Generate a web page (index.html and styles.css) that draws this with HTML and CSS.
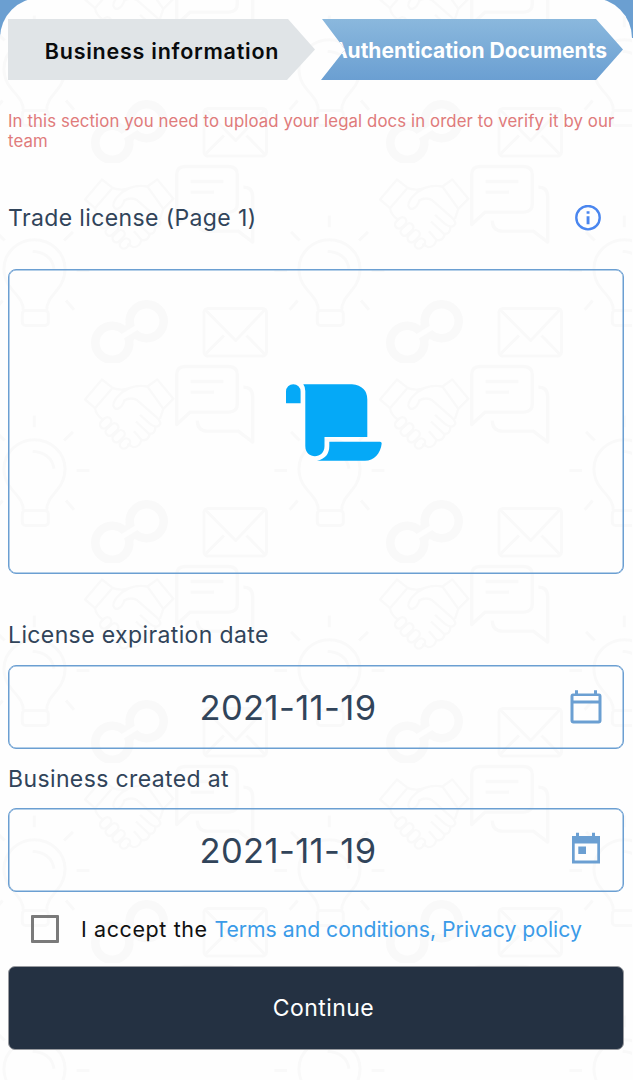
FILE: index.html
```html
<!DOCTYPE html>
<html lang="en">
<head>
<meta charset="utf-8">
<title>Authentication Documents</title>
<link rel="stylesheet" href="styles.css">
</head>
<body>
<main class="sheet">
  <svg class="backdrop" width="633" height="1082" aria-hidden="true">
    <defs>
      <pattern id="doodles" x="-25" y="-35" width="295" height="200" patternUnits="userSpaceOnUse">
        <g transform="translate(25 -162.500)" fill="none" stroke="#f9f9f9" stroke-linejoin="round">
          <!-- bulb -->
          <g transform="translate(0 160) scale(.33333)" stroke-width="9">
            <path d="M70 450C70 400 12 390 12 325C12 276 54 238 103 238S195 276 195 325C195 390 140 400 140 450"/>
            <rect x="67" y="450" width="78" height="45" rx="10"/>
            <path d="M98 272Q155 277 162 325M103 165V200M192 240L219 214M14 240L-12 214M198 420L222 448M8 420L-16 448M230 330H268M-24 330H-62"/>
          </g>
          <!-- link -->
          <g stroke-width="8.6">
            <circle cx="146.7" cy="320.7" r="17"/>
            <circle cx="112.3" cy="342.3" r="17"/>
            <path d="M125 335L134 329" stroke-width="17"/>
            <path d="M119 338L140 325" stroke="#fefefe" stroke-width="5"/>
          </g>
          <!-- envelope -->
          <g stroke-width="3">
            <rect x="204" y="308" width="62.5" height="47.5" rx="4"/>
            <path d="M205 309L235.7 340L265 309M224 335L205 354M246.500 335L265 354"/>
          </g>
          <g transform="translate(80 80) scale(.33333)" stroke-width="10">
            <!-- chat -->
            <path d="M290 432V283Q290 258 315 258H446Q472 258 472 283V370Q472 395 446 395H330ZM490 320Q518 320 518 348V485L475 452H383Q352 452 352 420"/>
            <path d="M332 303H430M332 335H402"/>
            <!-- handshake -->
            <g stroke-width="7">
              <path d="M66 297L15 357L45 383L98 322ZM232 297L280 355L250 385L202 318Z"/>
              <path d="M98 322Q125 333 150 322Q175 313 202 318M150 322C120 335 100 358 100 375C105 395 126 383 133 360Q150 349 170 358L232 412Q250 430 232 438Q224 440 210 430L180 403M250 385L240 415M226 440Q226 462 207 460L168 423M210 461Q202 484 184 478L162 452M184 480Q178 500 160 500L142 490M45 383Q48 403 68 417"/>
              <rect x="58" y="415" width="38" height="24" rx="12" transform="rotate(-45 77 427)"/>
              <rect x="74" y="435" width="44" height="24" rx="12" transform="rotate(-45 96 447)"/>
              <rect x="95" y="455" width="42" height="24" rx="12" transform="rotate(-45 116 467)"/>
              <rect x="118" y="477" width="34" height="24" rx="12" transform="rotate(-45 135 489)"/>
            </g>
          </g>
        </g>
      </pattern>
    </defs>
    <rect width="633" height="1082" fill="url(#doodles)"/>
  </svg>

  <div class="content">
    <nav class="steps">
      <div class="step step-done"><span>Business information</span></div>
      <div class="step step-current"><span>Authentication Documents</span></div>
    </nav>
    <p class="notice">In this section you need to upload your legal docs in order to verify it by our<br>team</p>

    <div class="row">
      <h2 class="label trade">Trade license (Page 1)</h2>
      <svg class="info" width="26" height="26" viewBox="0 0 26 26"><circle cx="13" cy="12.700" r="11.7" fill="none" stroke="#4a86ef" stroke-width="2.4"/><path d="M11.600 6.200h2.900v2.600h-2.900zM11.600 11.200h2.900v8h-2.900z" fill="#4a86ef"/></svg>
    </div>
    <div class="upload">
      <svg width="96" height="78" viewBox="0 0 96 78" fill="#05a9f7"><path d="M0 18.700V7.500a7.300 7.300 0 0 1 14.600 0V19.300H.6Q0 19.300 0 18.700ZM17.300.3H66Q81.300 2 81.300 15.500V53H38.500V62C38.500 75.600 19.300 75.600 19.300 62V7Q19.300 3 17.300.3ZM43.300 57.700H94Q95.700 57.700 95.700 59.500C94.500 70 88 76.700 79 76.700H31Q43.300 74 43.300 62Z"/></svg>
    </div>

    <h2 class="label expiry">License expiration date</h2>
    <div class="field">
      <span class="date">2021-11-19</span>
      <svg class="cal" width="32" height="36" viewBox="0 0 32 36" fill="#6b9fd2"><path fill-rule="evenodd" d="M3 4.500H5V1.200H8V4.500H24V1.200H27V4.500H29Q31.500 4.500 31.500 7.500V31.500Q31.500 34.500 28.500 34.500H3.500Q.5 34.500 .5 31.500V7.500Q.5 4.500 3 4.500ZM3.500 7V11.500H28.500V7ZM3.500 14.500V31.500H28.500V14.500Z"/></svg>
    </div>
    <h2 class="label created">Business created at</h2>
    <div class="field">
      <span class="date">2021-11-19</span>
      <svg class="cal" width="32" height="36" viewBox="0 0 32 36" fill="#6b9fd2"><path fill-rule="evenodd" d="M2 4H6V.7H9V4H22V.7H25V4H30V31.500H2ZM4.700 11.500V28.500H27.300V11.500ZM8.300 14.500H16V22H8.300Z"/></svg>
    </div>

    <div class="accept">
      <span class="checkbox"></span>
      <span class="terms">I accept the <a>Terms and conditions, Privacy policy</a></span>
    </div>
    <button class="continue">Continue</button>
  </div>
</main>
</body>
</html>
```
FILE: styles.css
```css
* { box-sizing: border-box; }
body {
  margin: 0;
  height: 1080px;
  overflow: hidden;
  font-family: Inter, "Liberation Sans", sans-serif;
  background: linear-gradient(#6b9fd1 38px, #fefefe 38px);
}
.sheet {
  position: relative;
  width: 632px;
  height: 1082px;
  margin-top: -2px;
  overflow: hidden;
  border-radius: 40px 40px 0 0;
  background: #fefefe;
}
.backdrop { position: absolute; inset: 0; }
.content {
  position: relative;
  display: flex;
  flex-direction: column;
  padding: 21px 8px 0;
}
.steps { display: flex; gap: 6px; height: 61px; }
.step {
  display: flex;
  align-items: center;
  justify-content: center;
  flex: none;
  padding-top: 2px;
  font-size: 21.500px;
  font-weight: 600;
  white-space: nowrap;
}
.step-done {
  width: 307px;
  padding-left: 1px;
  color: #090b0d;
  background: #e0e4e7;
  letter-spacing: .75px;
  clip-path: polygon(0 0, 280px 0, 100% 50%, 279px 100%, 0 100%);
}
.step-current {
  width: 302px;
  justify-content: flex-end;
  padding-right: 16px;
  color: #fff;
  background: linear-gradient(#8ab8dd, #6b9fd2);
  font-size: 21px;
  font-weight: 700;
  letter-spacing: 0;
  clip-path: polygon(1px 0, 275px 0, 100% 50%, 275px 100%, 0 100%, 24px 50%);
}
.notice {
  margin: 31px 0 0;
  color: #e07b7b;
  font-size: 16.800px;
  letter-spacing: .1px;
  line-height: 20px;
  white-space: nowrap;
}
.row {
  display: flex;
  align-items: center;
  justify-content: space-between;
  height: 30px;
  margin-top: 52px;
  padding-right: 23px;
}
.label {
  margin: 0;
  color: #31445a;
  font-size: 23px;
  font-weight: 400;
  letter-spacing: .38px;
  line-height: 30px;
  white-space: nowrap;
}
.upload {
  display: flex;
  align-items: center;
  justify-content: center;
  height: 305px;
  margin-top: 36px;
  padding: 2px 0 0 35px;
  border: 1px solid #6b9fd2;
  border-radius: 8px;
  box-shadow: inset 0 0 0 .5px #6b9fd2;
  width: 616px;
}
.expiry { margin-top: 46px; }
.field {
  display: flex;
  align-items: center;
  width: 616px;
  height: 84px;
  margin-top: 15px;
  padding-right: 21px;
  border: 1px solid #6b9fd2;
  border-radius: 8px;
  box-shadow: inset 0 0 0 .5px #6b9fd2;
}
.created { margin-top: 15px; }
.created + .field { margin-top: 14px; }
.date {
  flex: 1;
  padding-right: 3px;
  text-align: center;
  color: #31445a;
  font-size: 34.500px;
  letter-spacing: .4px;
}
.accept {
  display: flex;
  align-items: center;
  gap: 22px;
  height: 30px;
  margin-top: 22px;
  padding-left: 23px;
}
.checkbox {
  width: 28px;
  height: 28px;
  border: 3px solid #7a7a7a;
  border-radius: 1px;
}
.terms { color: #101010; font-size: 21.500px; letter-spacing: .6px; white-space: nowrap; }
.terms a { color: #3b9be8; font-size: 21.200px; letter-spacing: 0; }
.continue {
  width: 616px;
  height: 84px;
  margin-top: 22px;
  border: 1px solid #999ba0;
  border-radius: 7px;
  background: #243142;
  color: #fff;
  font: 400 23px Inter, "Liberation Sans", sans-serif;
  letter-spacing: .45px;
  padding-left: 21px;
}
```
